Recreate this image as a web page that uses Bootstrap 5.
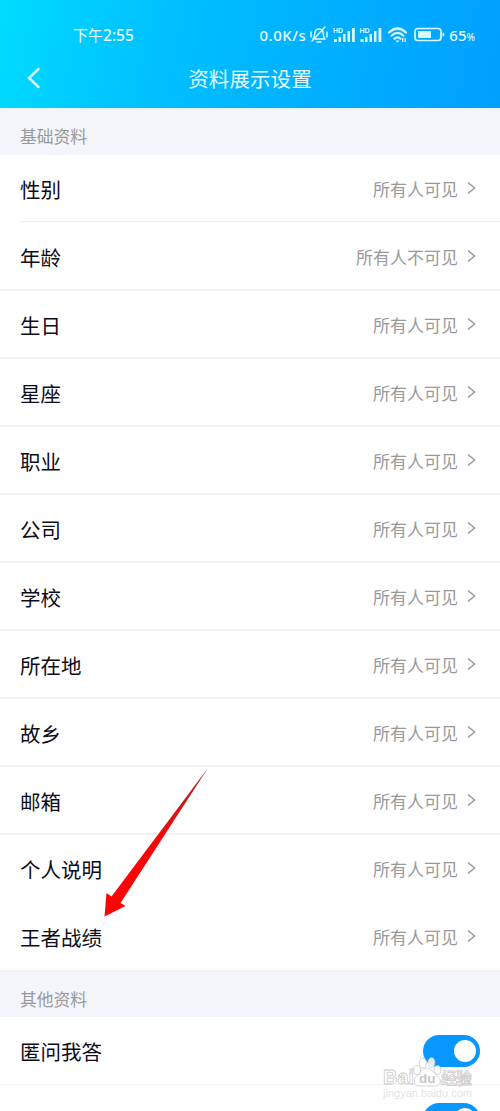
<!DOCTYPE html>
<html lang="zh-CN">
<head>
<meta charset="utf-8">
<meta name="viewport" content="width=device-width, initial-scale=1">
<title>资料展示设置</title>
<link href="https://cdn.jsdelivr.net/npm/bootstrap@5.3.0/dist/css/bootstrap.min.css" rel="stylesheet">
<style>
  body { font-family: "Noto Sans CJK SC", sans-serif; background: #fff; color: #0c0c18; }
  .screen { height: 1111px; }
  .topbar { height: 108px; background: linear-gradient(102deg, #00dcff 0%, #00c4ff 27%, #00b4ff 55%, #009fff 100%); color: #e4fcff; }
  .statusbar { height: 50px; padding: 20px 25px 0 73px; font-size: 15px; line-height: 30px; }
  .latin { font-family: "Noto Sans", "Noto Sans CJK SC", sans-serif; font-weight: 500; }
  .clock { font-family: "Noto Sans CJK SC", sans-serif; font-weight: 400; }
  .clock .latin { font-size: 15.5px; }
  .speed { letter-spacing: .5px; margin-right: 1px; }
  .percent { font-size: 10px; }
  .titlebar { height: 56px; font-size: 20.6px; line-height: 56px; }
  .back { width: 14px; height: 22px; margin-left: 27px; }
  .group-title { height: 47px; background: #f4f5fa; border-top: 1px solid #e8f6fb; color: #999; font-size: 16.8px; padding: 9px 20px 0; line-height: 36px; }
  .group-title.plain { border-top-color: #f0f0f4; padding-top: 10px; }
  .setting { height: 68px; padding: 2px 24px 0 20px; font-size: 20.5px; border-bottom: 2px solid #f2f2f4; }
  .setting.inset { border-color: transparent; position: relative; }
  .setting.inset::after { content: ""; position: absolute; left: 20px; right: 0; bottom: -1px; height: 1px; background: #eee; }
  .setting.flat { border-color: transparent; }
  .setting.final { height: 67px; border-bottom-width: 1px; border-color: transparent; }
  .setting.switchable { border-bottom-width: 1px; padding-top: 1px; }
  .setting.clipped > span:first-child { padding-top: 3px; }
  .val { font-size: 17px; color: #999; }
  .val svg { width: 9px; height: 14px; margin: -2px 0 0 9px; }
  .toggle { width: 57px; height: 32px; border-radius: 16px; background: #0897ff; padding: 5px 4px; margin: 0 -4px 0 0; }
  .knob { width: 22px; height: 22px; background: #fff; }
  .overlay { position: absolute; left: 0; top: 0; pointer-events: none; }
</style>
</head>
<body>
<div class="screen position-relative overflow-hidden">
  <header class="topbar">
    <div class="statusbar d-flex justify-content-between">
      <span class="clock">下午<span class="latin">2:55</span></span>
      <div class="d-flex">
        <span class="latin speed">0.0K/s</span>
        <svg width="142" height="30" viewBox="307 20 142 30" fill="none" stroke="#d8faff" stroke-width="1.5" stroke-linecap="round" stroke-linejoin="round">
          <path d="M313 39c2-2 1.500-5 2-7c1-4 7-4 8 0c.5 3 0 5 2 7zM317 42h4M325 27L312 41M311 32v5M327 32v5"/>
          <g stroke="none" fill="#d8faff">
            <text x="333" y="33" font-size="7" font-weight="700" font-family="Liberation Sans">HD</text>
            <path d="M334 39h3v3h-3zM338.500 37h2.500v5h-2.500zM343 34h2.500v8h-2.500zM347.500 31h2.500v11h-2.500zM352 28h2.800v14h-2.800z"/>
            <text x="359.500" y="33" font-size="7" font-weight="700" font-family="Liberation Sans">HD</text>
            <path d="M360.500 39h3v3h-3zM365 37h2.500v5h-2.500zM369.500 34h2.500v8h-2.500zM374 31h2.500v11h-2.500zM378.500 28h2.800v14h-2.800z"/>
          </g>
          <path stroke-width="2.200" d="M389 32.500q8.500-8 17 0M391.500 35.700q6-5.500 12 0M394.500 38.700q3-2.500 6 0"/>
          <path fill="#d8faff" stroke="none" d="M395.500 40.500h4l-2 2zM402 38h1.300v4h-1.300zM404.500 38h1.300v4h-1.300z"/>
          <rect x="415" y="28.500" width="26" height="12" rx="3" stroke-width="1.700"/>
          <path fill="#d8faff" stroke="none" d="M418 31h13v7h-13zM442.500 32.500q2 0 2 2t-2 2z"/>
        </svg>
        <span class="latin">65<span class="percent">%</span></span>
      </div>
    </div>
    <div class="titlebar position-relative text-center">
      <svg class="back position-absolute start-0 top-50 translate-middle-y" viewBox="0 0 14 22" fill="none" stroke="#d8faff" stroke-width="2.500" stroke-linecap="round"><path d="M11.500 2L2 11l9.500 9"/></svg>
      资料展示设置
    </div>
  </header>

  <main id="settings"></main>

  <svg class="overlay" width="500" height="1111" viewBox="0 0 500 1111">
    <defs>
      <linearGradient id="tail" x1="208" y1="768" x2="120" y2="900" gradientUnits="userSpaceOnUse">
        <stop offset="0" stop-color="#a51c1c"/><stop offset=".35" stop-color="#d81515"/><stop offset=".6" stop-color="#fa0505"/>
      </linearGradient>
    </defs>
    <path fill="url(#tail)" d="M208 768L120.500 903L125.500 906L104.500 916.500L106.500 893L111.500 896.500Z"/>
    <g fill="#fff" fill-opacity=".85" stroke="#bcbcbc" stroke-opacity=".8" stroke-width=".8" font-family="Liberation Sans">
      <path d="M427 1068c-5 0-8 6-11 9s-2 9 4 9h15c6 0 7-6 3-9s-6-9-11-9z"/>
      <ellipse cx="417" cy="1070" rx="3.500" ry="4.500"/><ellipse cx="423" cy="1063" rx="3.500" ry="5"/>
      <ellipse cx="431.500" cy="1062.500" rx="3.500" ry="5"/><ellipse cx="437.500" cy="1070" rx="3.500" ry="4.500"/>
      <text x="383" y="1084" font-size="20" font-weight="700" textLength="31" lengthAdjust="spacingAndGlyphs">Bai</text>
      <text x="419" y="1083" font-size="13.500" font-weight="700" fill="#bbb" stroke="none">du</text>
      <text x="441" y="1084" font-size="16" font-weight="500" textLength="31" font-family="Noto Sans CJK SC">经验</text>
      <text x="383" y="1097" font-size="10.500" textLength="89" lengthAdjust="spacingAndGlyphs" fill="#ddd" stroke="none">jingyan.baidu.com</text>
    </g>
  </svg>
</div>
<script src="https://cdn.jsdelivr.net/npm/bootstrap@5.3.0/dist/js/bootstrap.bundle.min.js"></script>
<script>
  const all = '所有人可见';
  const basic = [['性别', all, 'inset'], ['年龄', '所有人不可见'], ['生日', all], ['星座', all], ['职业', all], ['公司', all],
    ['学校', all], ['所在地', all], ['故乡', all], ['邮箱', all], ['个人说明', all, 'flat'], ['王者战绩', all, 'final']];
  const other = [['匿问我答', 'switchable'], ['坦白说', 'switchable clipped']];
  const row = (label, right, cls = '') =>
    `<div class="setting d-flex align-items-center justify-content-between ${cls}"><span>${label}</span>${right}</div>`;
  const value = v => `<span class="val d-flex align-items-center">${v}<svg viewBox="0 0 9 14" fill="none" stroke="#999" stroke-width="1.500"><path d="M1 1.500L7.500 7L1 12.500"/></svg></span>`;
  const toggle = '<span class="toggle d-flex justify-content-end"><span class="knob rounded-circle"></span></span>';
  document.getElementById('settings').innerHTML =
    '<div class="group-title">基础资料</div>' + basic.map(([l, v, c]) => row(l, value(v), c)).join('') +
    '<div class="group-title plain">其他资料</div>' + other.map(([l, c]) => row(l, toggle, c)).join('');
</script>
</body>
</html>
